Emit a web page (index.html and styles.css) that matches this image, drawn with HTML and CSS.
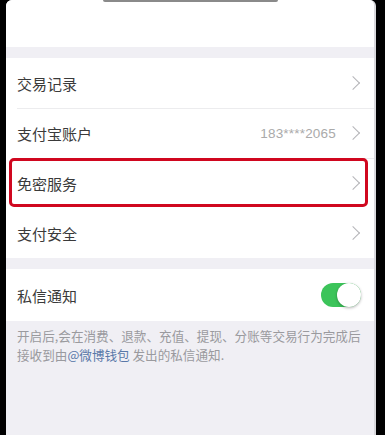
FILE: index.html
```html
<!DOCTYPE html>
<html>
<head>
<meta charset="utf-8">
<link rel="stylesheet" href="styles.css">
</head>
<body>
<div class="screen">
  <div class="notch"></div>
  <div class="top"></div>
  <div class="gap"></div>
  <div class="group">
    <div class="row"><span class="title">交易记录</span><span class="chev"></span></div>
    <div class="row"><span class="title">支付宝账户</span><span class="value">183****2065</span><span class="chev"></span></div>
    <div class="row highlight"><span class="title">免密服务</span><span class="chev"></span></div>
    <div class="row"><span class="title">支付安全</span><span class="chev"></span></div>
  </div>
  <div class="gap"></div>
  <div class="group">
    <div class="row last"><span class="title">私信通知</span><span class="toggle"><span class="knob"></span></span></div>
  </div>
  <div class="note">
    <div class="line">开启后,会在消费、退款、充值、提现、分账等交易行为完成后</div>
    <div class="line">接收到由<span class="link">@微博钱包</span> 发出的私信通知.</div>
  </div>
</div>
</body>
</html>
```
FILE: styles.css
```css
html, body {
  margin: 0;
  padding: 0;
  height: 100%;
  background: #000;
  overflow: hidden;
}
body {
  font-family: "Noto Sans CJK SC", "Noto Sans", sans-serif;
}
.screen {
  position: relative;
  margin-left: 6px;
  width: 368px;
  height: 435px;
  background: #f0eff4;
  border-radius: 6px 6px 0 0;
  border-right: 2px solid #d8d8dc;
  overflow: hidden;
}
.notch {
  position: absolute;
  left: 97px;
  top: 0;
  width: 175px;
  height: 2px;
  background: #8a8a8a;
  border-radius: 0 0 3px 3px;
}
.top {
  height: 47px;
  background: #fff;
}
.gap {
  height: 11px;
}
.group {
  background: #fff;
}
.row {
  display: flex;
  align-items: center;
  height: 50px;
  padding: 0 14px 0 11px;
  box-sizing: border-box;
  position: relative;
}
.row + .row::before {
  content: "";
  position: absolute;
  left: 11px;
  right: 0;
  top: 0;
  height: 1px;
  background: #ececee;
}
.title {
  flex: 1;
  font-size: 15px;
  color: #3a3a3a;
}
.value {
  font-size: 13.5px;
  color: #aaa;
  margin-right: 12px;
  font-family: "Liberation Sans", sans-serif;
  letter-spacing: 0.2px;
}
.chev {
  width: 9px;
  height: 9px;
  border-right: 1.2px solid #b4b4b8;
  border-top: 1.2px solid #b4b4b8;
  transform: rotate(45deg);
  margin-right: 2px;
}
.highlight::after {
  content: "";
  position: absolute;
  left: 3px;
  right: 6px;
  top: 0;
  bottom: 1px;
  border: 3.5px solid #d0071f;
  border-radius: 5px;
}
.highlight + .row::before {
  display: none;
}
.last {
  height: 52px;
}
.toggle {
  position: relative;
  width: 40px;
  height: 24px;
  border-radius: 12px;
  background: #3cc45a;
  margin-right: -1px;
}
.knob {
  position: absolute;
  right: 0;
  top: 0;
  width: 24px;
  height: 24px;
  border-radius: 50%;
  background: #fff;
  box-shadow: 0 1px 3px rgba(0,0,0,0.3);
}
.note {
  display: flex;
  flex-direction: column;
  padding: 6px 0 0 11px;
  font-size: 12.6px;
  color: #9a9a9e;
  white-space: nowrap;
}
.line {
  height: 18.5px;
  line-height: 18.5px;
}
.link {
  color: #5a78a8;
}
```
